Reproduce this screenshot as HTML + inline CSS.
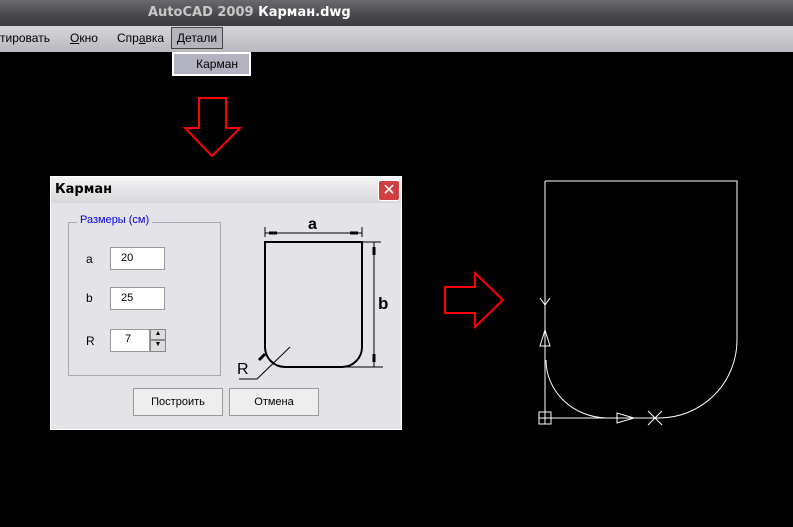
<!DOCTYPE html>
<html><head><meta charset="utf-8"><style>
body{margin:0;width:793px;height:527px;background:#000;overflow:hidden;position:relative;font-family:"Liberation Sans",sans-serif}
.abs{position:absolute}
</style></head><body>
<div class="abs" style="left:0;top:0;width:793px;height:26px;background:linear-gradient(#6a6a6e,#48484c 60%,#3c3c40)"></div>
<div class="abs" style="left:148px;top:5px;font:bold 13px 'DejaVu Sans',sans-serif;color:#c8c8c8;white-space:nowrap">AutoCAD 2009 <span style="color:#fff">Карман.dwg</span></div>
<div class="abs" style="left:0;top:26px;width:793px;height:26px;background:linear-gradient(#d6d6da,#b8b8be)"></div>
<div class="abs" style="left:0;top:31px;font-size:12px;color:#000;white-space:nowrap">тировать</div>
<div class="abs" style="left:70px;top:31px;font-size:12px;color:#000"><u>О</u>кно</div>
<div class="abs" style="left:117px;top:31px;font-size:12px;color:#000">Спр<u>а</u>вка</div>
<div class="abs" style="left:171px;top:27px;width:50px;height:20px;border:1px solid #444;background:#b4b4bc;font-size:12px;line-height:20px;text-align:center">Детали</div>
<div class="abs" style="left:172px;top:52px;width:74px;height:20px;border:2px solid #fff;background:#b2b2c0;font-size:12px;line-height:20px;text-align:right;padding-right:1px;box-sizing:content-box"><span style="margin-right:10px">Карман</span></div>

<svg class="abs" style="left:0;top:0" width="793" height="527">
<polygon points="199,98 226,98 226,128 240,128 212,156 185,128 199,128" fill="none" stroke="#f00" stroke-width="2"/>
<polygon points="445,287 475,287 475,273 503,300 475,327 475,313 445,313" fill="none" stroke="#f00" stroke-width="2"/>
<g stroke="#fff" fill="none" stroke-width="1">
<path d="M545,181 H737 V340 A78,78 0 0 1 659,418 H545 V181"/>
<path d="M546,360 A62,58 0 0 0 606,418"/>
<rect x="539" y="412" width="12" height="12"/><path d="M545,412V424M539,418H551"/>
<path d="M540,298 L545,305 L550,298 M545,305V312"/>
<polygon points="545,330 540,346 550,346"/>
<polygon points="617,413 617,423 634,418"/>
<path d="M648,411 L662,425 M662,411 L648,425"/>
</g>
</svg>

<div class="abs" style="left:50px;top:176px;width:352px;height:254px;background:#e4e4e8;border:1px solid #fff;box-sizing:border-box">
<div style="height:26px;background:linear-gradient(#f4f4f6,#d8d8dc);font:bold 13px 'DejaVu Sans',sans-serif;line-height:26px;padding-left:4px">Карман</div>
<div class="abs" style="left:327px;top:3px;width:20px;height:19px;background:#d04040;border:1px solid #fff;border-radius:3px;color:#fff;font-size:16px;line-height:19px;text-align:center">✕</div>
<div class="abs" style="left:17px;top:45px;width:151px;height:152px;border:1px solid #a8a8b0"></div>
<div class="abs" style="left:26px;top:37px;background:#e4e4e8;padding:0 3px;color:#0000e0;font-size:11px">Размеры (см)</div>
<div class="abs" style="left:35px;top:75px;font-size:12px">a</div>
<div class="abs" style="left:35px;top:114px;font-size:12px">b</div>
<div class="abs" style="left:35px;top:157px;font-size:12px">R</div>
<div class="abs" style="left:59px;top:70px;width:55px;height:23px;background:#fff;border:1px solid #999;box-sizing:border-box;font-size:11px;padding:4px 10px">20</div>
<div class="abs" style="left:59px;top:110px;width:55px;height:23px;background:#fff;border:1px solid #999;box-sizing:border-box;font-size:11px;padding:4px 10px">25</div>
<div class="abs" style="left:59px;top:152px;width:40px;height:23px;background:#fff;border:1px solid #999;box-sizing:border-box;font-size:11px;padding:3px 14px">7</div>
<div class="abs" style="left:99px;top:152px;width:16px;height:11px;background:#ddd;border:1px solid #888;box-sizing:border-box;font-size:7px;text-align:center">▲</div>
<div class="abs" style="left:99px;top:163px;width:16px;height:12px;background:#ddd;border:1px solid #888;box-sizing:border-box;font-size:7px;text-align:center">▼</div>
<svg class="abs" style="left:180px;top:30px" width="160" height="175">
<g stroke="#000" fill="none">
<path d="M34,35 V140 A20,20 0 0 0 54,160 H111 A20,20 0 0 0 131,140 V35 Z" stroke-width="2"/>
<path d="M34,30V20M131,30V20M34,26H131M131,35H150M111,160H152M143,35V160M59,140L26,172H8" stroke-width="1"/>
<path d="M38,26H46M119,26H127M143,40V48M143,147V155M34,147L28,153" stroke-width="3"/>
</g>
<text x="77" y="22" font-size="16" font-weight="bold" font-family="Liberation Sans">a</text>
<text x="147" y="102" font-size="17" font-weight="bold" font-family="Liberation Sans">b</text>
<text x="6" y="167" font-size="16" font-family="Liberation Sans">R</text>
</svg>
<div class="abs" style="left:82px;top:211px;width:90px;height:28px;background:#eee;border:1px solid #999;box-sizing:border-box;font-size:11px;line-height:26px;text-align:center">Построить</div>
<div class="abs" style="left:178px;top:211px;width:90px;height:28px;background:#eee;border:1px solid #999;box-sizing:border-box;font-size:11px;line-height:26px;text-align:center">Отмена</div>
</div>
</body></html>
